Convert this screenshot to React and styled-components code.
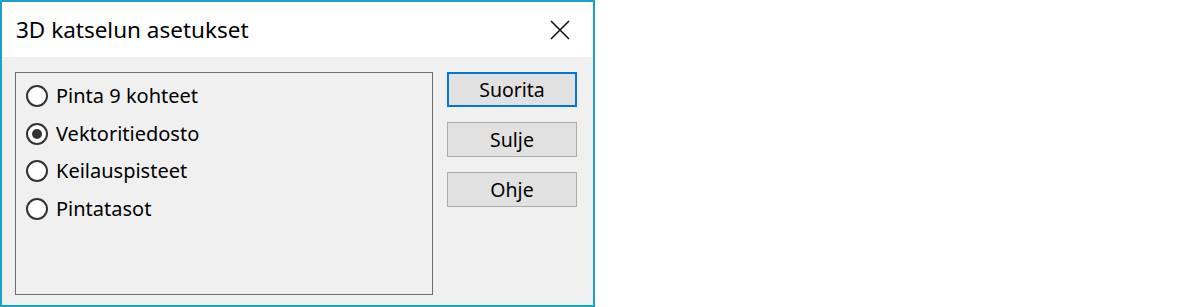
import styled, { createGlobalStyle } from "styled-components";

const GlobalStyle = createGlobalStyle`
  html, body {
    margin: 0;
    padding: 0;
    background: #ffffff;
  }
  body {
    font-family: "Noto Sans", "Open Sans", sans-serif;
  }
`;

const Window = styled.div`
  box-sizing: border-box;
  width: 595px;
  height: 307px;
  border: 2px solid #1aa1c8;
  background: #f0f0f0;
  display: flex;
  flex-direction: column;
`;

const TitleBar = styled.div`
  height: 55px;
  background: #ffffff;
  display: flex;
  align-items: center;
  justify-content: space-between;
  padding: 0 23px 0 14px;
`;

const Title = styled.div`
  font-size: 22.5px;
  line-height: 1;
  color: #000000;
  padding-top: 1px;
`;

const CloseButton = styled.div`
  width: 20px;
  height: 20px;
  display: flex;
  margin-top: 1px;
`;

const Body = styled.div`
  flex: 1;
  display: flex;
  gap: 14px;
  padding: 15px 0 0 13px;
`;

const Group = styled.div`
  box-sizing: border-box;
  width: 418px;
  height: 223px;
  border: 1px solid #6d6d6d;
  padding: 4px 0 0 10px;
  display: flex;
  flex-direction: column;
`;

const RadioRow = styled.label`
  height: 37.7px;
  display: flex;
  align-items: center;
  gap: 8px;
  font-size: 20px;
  line-height: 1;
  color: #000000;
`;

const RadioCircle = styled.span`
  box-sizing: border-box;
  width: 22px;
  height: 22px;
  border-radius: 50%;
  border: 2px solid #333333;
  background: #ffffff;
  display: flex;
  align-items: center;
  justify-content: center;

  &::after {
    content: "";
    width: 10px;
    height: 10px;
    border-radius: 50%;
    background: ${(props) => (props.checked ? "#333333" : "transparent")};
  }
`;

const Buttons = styled.div`
  display: flex;
  flex-direction: column;
  gap: 15px;
`;

const Button = styled.div`
  box-sizing: border-box;
  width: 130px;
  height: 35px;
  background: #e1e1e1;
  border: ${(props) => (props.primary ? "2px solid #0078d7" : "1px solid #adadad")};
  display: flex;
  align-items: center;
  justify-content: center;
  font-size: 19.5px;
  line-height: 1;
  color: #000000;
`;

const options = [
  { label: "Pinta 9 kohteet", checked: false },
  { label: "Vektoritiedosto", checked: true },
  { label: "Keilauspisteet", checked: false },
  { label: "Pintatasot", checked: false },
];

const App = () => {
  return (
    <>
      <GlobalStyle />
      <Window>
        <TitleBar>
          <Title>3D katselun asetukset</Title>
          <CloseButton>
            <svg width="20" height="20" viewBox="0 0 20 20">
              <path d="M1 1L19 19M19 1L1 19" stroke="#111" strokeWidth="1.6" />
            </svg>
          </CloseButton>
        </TitleBar>
        <Body>
          <Group>
            {options.map((o) => (
              <RadioRow key={o.label}>
                <RadioCircle checked={o.checked} />
                {o.label}
              </RadioRow>
            ))}
          </Group>
          <Buttons>
            <Button primary>Suorita</Button>
            <Button>Sulje</Button>
            <Button>Ohje</Button>
          </Buttons>
        </Body>
      </Window>
    </>
  );
};

export default App;
